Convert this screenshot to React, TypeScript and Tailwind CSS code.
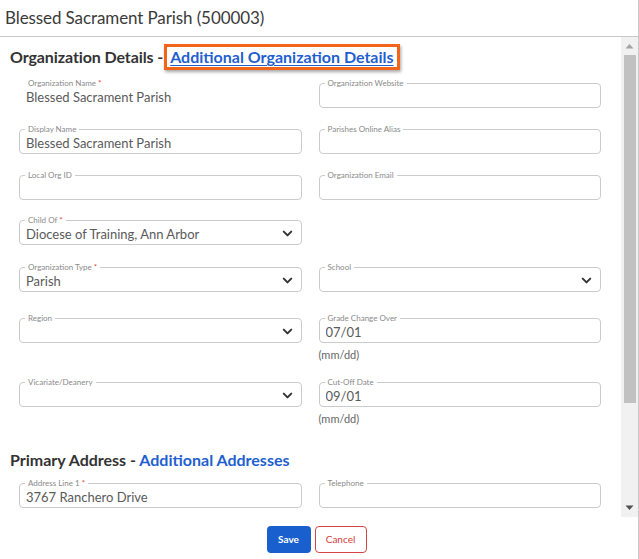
import { ChevronDown } from "lucide-react";

type FieldProps = {
  label: string;
  value?: string;
  required?: boolean;
  select?: boolean;
  bare?: boolean;
  hint?: string;
};

function Field({ label, value, required, select, bare, hint }: FieldProps) {
  return (
    <div className="flex flex-col">
      <div
        className={`relative h-[25px] rounded-[4px] border flex items-center pl-[6px] pr-[6px] pt-[3px] ${
          bare ? "border-transparent" : "border-[#cbcbcb]"
        }`}
      >
        <span className="absolute -top-[6px] left-[5px] bg-white px-[3px] text-[8px] leading-[10px] text-[#8a8a8a] whitespace-nowrap">
          {label}
          {required && <span className="text-[#e0453a]"> *</span>}
        </span>
        <span className="flex-1 text-[13px] leading-[16px] text-[#5a5a5a] truncate">{value}</span>
        {select && <ChevronDown size={15} strokeWidth={3.2} className="text-[#333] -mt-[2px]" />}
      </div>
      {hint && <div className="mt-[5px] text-[11px] leading-[14px] text-[#666]">{hint}</div>}
    </div>
  );
}

export default function App() {
  return (
    <div
      className="w-[639px] h-[559px] bg-white border-r border-[#c8c8c8] flex flex-col overflow-hidden"
      style={{ fontFamily: "Lato, 'Open Sans', sans-serif" }}
    >
      {/* Title */}
      <div className="h-[37px] shrink-0 border-b border-[#c8c8c8] flex items-center px-[5px]">
        <h1 className="text-[17px] text-[#3a3a3a] tracking-[-0.1px]">Blessed Sacrament Parish (500003)</h1>
      </div>

      {/* Body */}
      <div className="h-[480px] shrink-0 flex">
        <div className="flex-1 overflow-hidden">
          <div className="pl-[10px] pt-[4px] flex items-center h-[32px] box-content">
            <span className="text-[16px] leading-[18px] font-bold text-[#333] tracking-[-0.1px]">
              Organization Details -
            </span>
            <span className="ml-[1px] border-[3px] border-[#f26419] px-[3px] py-[1px] leading-[18px] shadow-[1px_2px_3px_rgba(0,0,0,0.35)]">
              <a className="text-[16px] leading-[18px] font-bold text-[#1f5fcf] underline underline-offset-2">
                Additional Organization Details
              </a>
            </span>
          </div>

          <div className="px-[19px] pr-[20px] mt-[10px] flex flex-col">
            <div className="grid grid-cols-2 gap-x-[17px]">
              <Field label="Organization Name" value="Blessed Sacrament Parish" required bare />
              <Field label="Organization Website" />
            </div>
            <div className="grid grid-cols-2 gap-x-[17px] mt-[21px]">
              <Field label="Display Name" value="Blessed Sacrament Parish" />
              <Field label="Parishes Online Alias" />
            </div>
            <div className="grid grid-cols-2 gap-x-[17px] mt-[21px]">
              <Field label="Local Org ID" />
              <Field label="Organization Email" />
            </div>
            <div className="grid grid-cols-2 gap-x-[17px] mt-[20px]">
              <Field label="Child Of" value="Diocese of Training, Ann Arbor" required select />
              <div />
            </div>
            <div className="grid grid-cols-2 gap-x-[17px] mt-[22px]">
              <Field label="Organization Type" value="Parish" required select />
              <Field label="School" select />
            </div>
            <div className="grid grid-cols-2 gap-x-[17px] mt-[26px] items-start">
              <Field label="Region" select />
              <Field label="Grade Change Over" value="07/01" hint="(mm/dd)" />
            </div>
            <div className="grid grid-cols-2 gap-x-[17px] mt-[20px] items-start">
              <Field label="Vicariate/Deanery" select />
              <Field label="Cut-Off Date" value="09/01" hint="(mm/dd)" />
            </div>
          </div>

          <div className="pl-[10px] mt-[24px] text-[16px] leading-[20px] font-bold text-[#333]">
            Primary Address - <span className="text-[#1f5fcf]">Additional Addresses</span>
          </div>

          <div className="px-[19px] pr-[20px] mt-[13px] grid grid-cols-2 gap-x-[17px]">
            <Field label="Address Line 1" value="3767 Ranchero Drive" required />
            <Field label="Telephone" />
          </div>
        </div>

        {/* Scrollbar */}
        <div className="w-[17px] bg-[#f1f1f1] flex flex-col items-center">
          <svg width="9" height="6" viewBox="0 0 9 6" className="mt-[6px]">
            <path d="M0.5 5.5 L4.5 1 L8.5 5.5 Z" fill="#a3a3a3" />
          </svg>
          <div className="w-[12px] h-[348px] bg-[#c1c1c1] mt-[6px]" />
          <div className="flex-1" />
          <svg width="9" height="6" viewBox="0 0 9 6" className="mb-[6px]">
            <path d="M0.5 0.5 L8.5 0.5 L4.5 5 Z" fill="#505050" />
          </svg>
        </div>
      </div>

      {/* Footer */}
      <div className="flex justify-center gap-[4px] pt-[9px] pr-[5px]">
        <button className="h-[27px] w-[44px] rounded-[4px] bg-[#1a5fce] text-white text-[10px] font-bold">
          Save
        </button>
        <button className="h-[27px] w-[52px] rounded-[4px] border border-[#d64545] text-[#d23c3c] text-[10px]">
          Cancel
        </button>
      </div>
    </div>
  );
}
